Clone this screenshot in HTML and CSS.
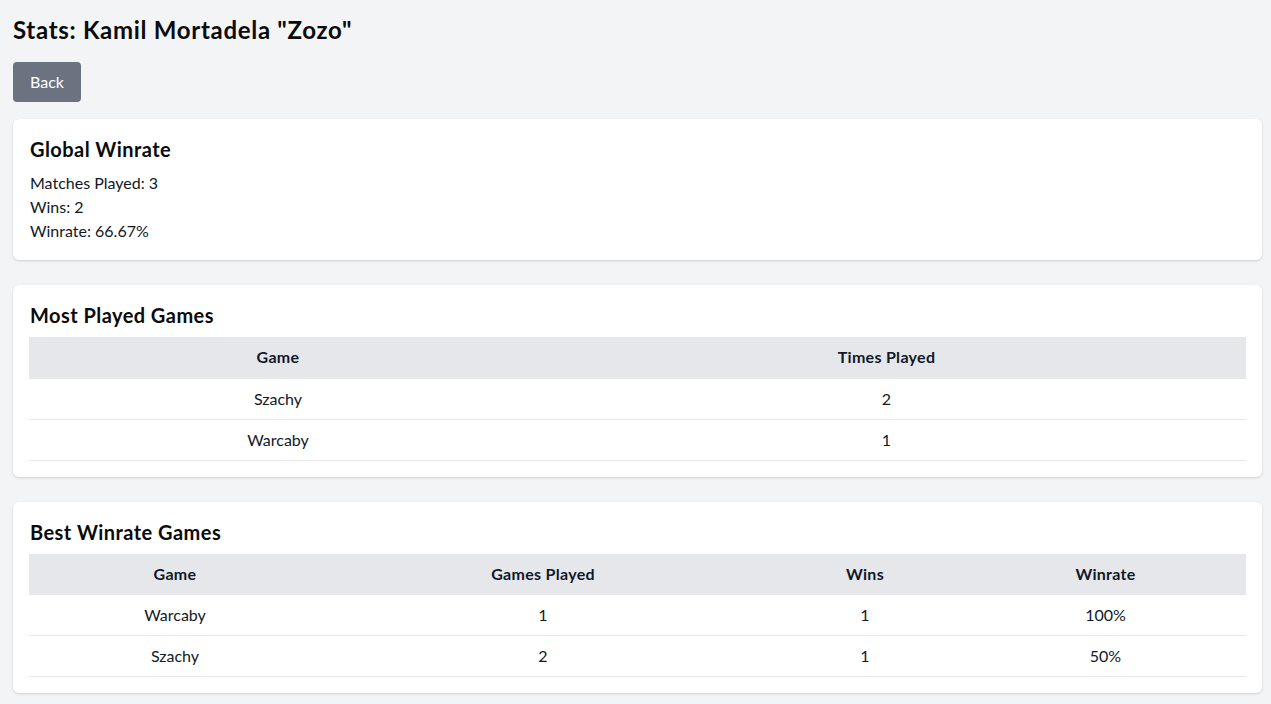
FILE: index.html
```html
<!DOCTYPE html>
<html lang="en">
<head>
<meta charset="utf-8">
<title>Stats</title>
<link rel="stylesheet" href="styles.css">
</head>
<body>
<div class="page">
  <h1 class="title">Stats: Kamil Mortadela "Zozo"</h1>
  <button class="btn-back" type="button">Back</button>

  <section class="card card-global">
    <h2 class="card-title">Global Winrate</h2>
    <p class="line">Matches Played: 3</p>
    <p class="line">Wins: 2</p>
    <p class="line">Winrate: 66.67%</p>
  </section>

  <section class="card">
    <h2 class="card-title">Most Played Games</h2>
    <table class="stats-table">
      <colgroup>
        <col class="mp-c1">
        <col class="mp-c2">
      </colgroup>
      <thead>
        <tr><th>Game</th><th>Times Played</th></tr>
      </thead>
      <tbody>
        <tr><td>Szachy</td><td>2</td></tr>
        <tr><td>Warcaby</td><td>1</td></tr>
      </tbody>
    </table>
  </section>

  <section class="card">
    <h2 class="card-title">Best Winrate Games</h2>
    <table class="stats-table">
      <colgroup>
        <col class="bw-c1">
        <col class="bw-c2">
        <col class="bw-c3">
        <col class="bw-c4">
      </colgroup>
      <thead>
        <tr><th>Game</th><th>Games Played</th><th>Wins</th><th>Winrate</th></tr>
      </thead>
      <tbody>
        <tr><td>Warcaby</td><td>1</td><td>1</td><td>100%</td></tr>
        <tr><td>Szachy</td><td>2</td><td>1</td><td>50%</td></tr>
      </tbody>
    </table>
  </section>
</div>
</body>
</html>
```
FILE: styles.css
```css
* { box-sizing: border-box; }

html, body {
  margin: 0;
  padding: 0;
  background: #f3f4f6;
}

body {
  font-family: Lato, "Noto Sans", sans-serif;
  color: #111827;
  font-size: 16px;
  line-height: 24px;
}

.page {
  padding: 14px 9px 12px 13px;
  display: flex;
  flex-direction: column;
  align-items: stretch;
}

.title {
  margin: 0 0 16px 0;
  font-size: 24px;
  line-height: 32px;
  font-weight: 700;
  letter-spacing: 0.7px;
  color: #0b0b0b;
}

.btn-back {
  align-self: flex-start;
  background: #6b7280;
  color: #ffffff;
  border: none;
  border-radius: 4px;
  height: 40px;
  padding: 0 17px;
  font-family: inherit;
  font-size: 16px;
  line-height: 24px;
  margin-bottom: 17px;
  cursor: pointer;
}

.card {
  background: #ffffff;
  border-radius: 6px;
  box-shadow: 0 1px 3px rgba(0,0,0,0.1), 0 1px 2px rgba(0,0,0,0.06);
  padding: 16px;
  margin-bottom: 25px;
}

.card-global {
  padding-bottom: 17px;
}

.card-title {
  margin: 0 0 8px 1px;
  font-size: 20px;
  line-height: 28px;
  font-weight: 700;
  letter-spacing: 0.45px;
  color: #0b0b0b;
}

.line {
  margin: 0 0 0 1px;
}

.stats-table {
  width: 100%;
  border-collapse: collapse;
  table-layout: fixed;
}

.stats-table th {
  background: #e5e7eb;
  font-weight: 700;
  letter-spacing: 0.3px;
  padding: 8px 16px;
  text-align: center;
  height: 41px;
  border-bottom: 1px solid #e5e7eb;
}

.stats-table td {
  padding: 8px 16px;
  text-align: center;
  height: 41px;
  border-bottom: 1px solid #e5e7eb;
}

.mp-c1 { width: 498px; }
.mp-c2 { width: auto; }

.bw-c1 { width: 292px; }
.bw-c2 { width: 444px; }
.bw-c3 { width: 200px; }
.bw-c4 { width: auto; }
```
